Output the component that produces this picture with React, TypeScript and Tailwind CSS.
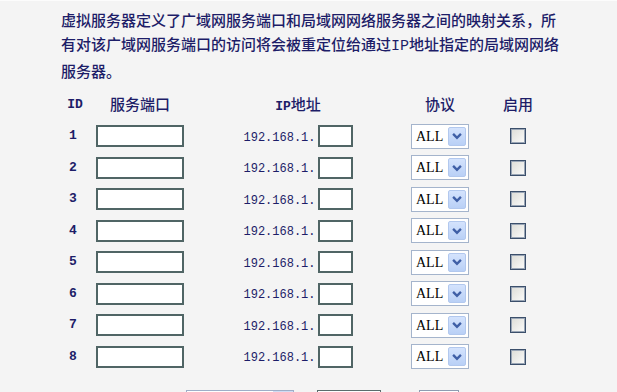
import React from "react";

const navy = "text-[#1d1d68]";

function Chevron() {
  return (
    <svg width="18" height="20" viewBox="0 0 18 20">
      <polyline points="5.5,8.5 9,12 12.5,8.5" fill="none" stroke="#3f5fa6" strokeWidth="2.6" strokeLinecap="square" />
    </svg>
  );
}

function Select() {
  return (
    <div className="relative w-[58px] h-[25px] border border-[#a4b4cc] bg-white">
      <span className="absolute left-[4px] top-[3px] text-[14px] leading-[17px] text-black" style={{ fontFamily: '"Liberation Serif", serif' }}>
        ALL
      </span>
      <div className="absolute right-[2px] top-[2px] w-[18px] h-[19px] rounded-[2px] border border-[#b2c8ee] bg-gradient-to-b from-[#d4e3fd] to-[#b9d0f6] flex items-center justify-center">
        <Chevron />
      </div>
    </div>
  );
}

function Checkbox() {
  return <div className="w-[16px] h-[16px] border border-[#3b4f6b] shadow-[inset_0_0_0_1px_#9aa6b6] bg-gradient-to-br from-[#dcdcd6] to-[#fcfcfb]" />;
}

function TextBox({ w }: { w: string }) {
  return <div className={`${w} h-[22px] border-2 border-[#506565] bg-white`} />;
}

const rowHeights = ["h-[32px]", "h-[31px]"];

export default function App() {
  const rows = [1, 2, 3, 4, 5, 6, 7, 8];
  return (
    <div className="w-[617px] h-[392px] overflow-hidden bg-[#f4f4f4] border-t border-[#fcfcfc]" style={{ fontFamily: '"Noto Sans CJK SC", sans-serif' }}>
      <div className={`pl-[61px] pt-[7px] text-[15px] leading-[24px] font-medium ${navy} whitespace-nowrap`}>
        <div>虚拟服务器定义了广域网服务端口和局域网网络服务器之间的映射关系，所</div>
        <div>
          有对该广域网服务端口的访问将会被重定位给通过<span style={{ fontFamily: '"Liberation Mono", monospace' }}>IP</span>地址指定的局域网网络
        </div>
        <div>服务器。</div>
      </div>

      <div className="ml-[55px] mt-[6px]">
        <div className={`grid grid-cols-[40px_90px_226px_58px_98px] h-[31px] items-center text-[15px] font-medium ${navy}`}>
          <div className="text-center text-[13px] font-bold" style={{ fontFamily: '"Liberation Mono", monospace' }}>ID</div>
          <div className="text-center">服务端口</div>
          <div className="text-center">
            <span style={{ fontFamily: '"Liberation Mono", monospace' }} className="text-[13px] font-bold">IP</span>地址
          </div>
          <div className="text-center">协议</div>
          <div className="text-center">启用</div>
        </div>
        {rows.map((n, i) => (
          <div key={n} className={`grid grid-cols-[40px_90px_226px_58px_98px] ${rowHeights[i % 2]} items-center ${navy}`}>
            <div className="text-center text-[13px] font-bold pr-[4px]" style={{ fontFamily: '"Liberation Mono", monospace' }}>{n}</div>
            <div className="flex justify-center">
              <TextBox w="w-[88px]" />
            </div>
            <div className="flex justify-center items-center">
              <span className="text-[12px] mr-[2px] mt-[3px]" style={{ fontFamily: '"Liberation Mono", monospace' }}>192.168.1.</span>
              <TextBox w="w-[35px]" />
            </div>
            <div className="flex justify-center">
              <Select />
            </div>
            <div className="flex justify-center">
              <Checkbox />
            </div>
          </div>
        ))}
      </div>

      <div className="flex mt-[18px] h-[26px]">
        <div className="ml-[186px] w-[108px] h-[24px] border border-[#9eaec8] bg-gradient-to-b from-white to-[#e6ecf6] flex justify-end">
          <div className="w-[20px] h-full bg-[#cfdcf4]" />
        </div>
        <div className="ml-[23px] w-[64px] h-[24px] border border-[#5b6d6d] bg-white" />
        <div className="ml-[38px] w-[40px] h-[24px] border border-[#8e9cb2] bg-gradient-to-b from-white to-[#e6ecf6]" />
      </div>
    </div>
  );
}
